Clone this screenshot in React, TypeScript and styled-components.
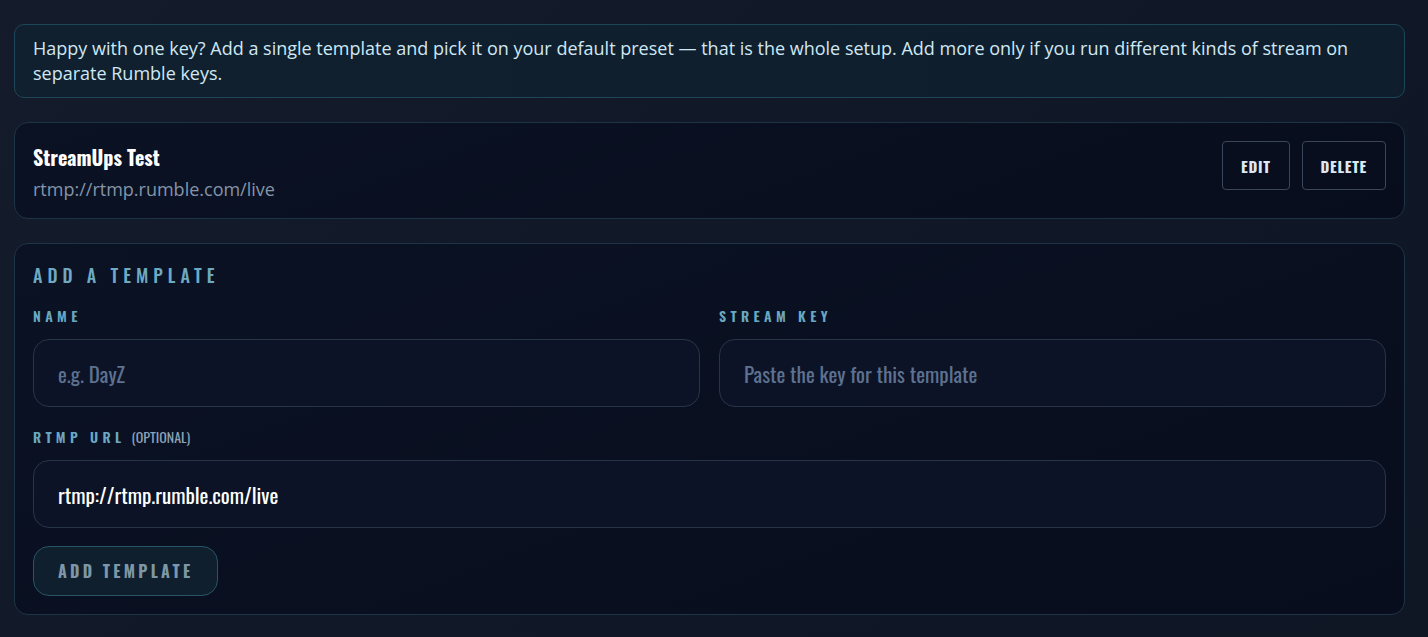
import React from "react";
import styled, { createGlobalStyle } from "styled-components";

const Global = createGlobalStyle`
  html, body { margin: 0; padding: 0; background: #111827; }
  body { font-family: "Open Sans", "Noto Sans", sans-serif; color: #e5edf5; }
  * { box-sizing: border-box; }
`;

const COND = `"Oswald", "Liberation Sans Narrow", "DejaVu Sans Condensed", "Roboto", sans-serif`;

const Page = styled.div`
  min-height: 637px;
  padding: 24px 23px 24px 14px;
  display: flex;
  flex-direction: column;
  gap: 24px;
  background: linear-gradient(135deg, #141c2b 0%, #101727 60%, #0f1624 100%);
`;

const Notice = styled.div`
  border: 1px solid #1d4658;
  border-radius: 10px;
  background: linear-gradient(90deg, #10202f 0%, #0f1e2d 100%);
  padding: 11px 18px;
  font-size: 18px;
  line-height: 25px;
  color: #cfe8f4;
`;

const Card = styled.section<{ $pad?: string }>`
  border: 1px solid #1d3346;
  border-radius: 14px;
  background: linear-gradient(160deg, #0b1224 0%, #070d1c 100%);
  padding: ${(p) => p.$pad ?? "18px"};
`;

const TemplateRow = styled.div`
  display: flex;
  align-items: flex-start;
  justify-content: space-between;
`;

const TemplateInfo = styled.div`
  display: flex;
  flex-direction: column;
  gap: 3px;
`;

const TemplateName = styled.div`
  font-family: ${COND};
  font-weight: 700;
  font-size: 20px;
  line-height: 32px;
  color: #ffffff;
`;

const TemplateUrl = styled.div`
  font-size: 18px;
  line-height: 26px;
  color: #8594a8;
`;

const Actions = styled.div`
  display: flex;
  gap: 12px;
`;

const GhostButton = styled.button`
  height: 49px;
  padding: 0 18px;
  border: 1px solid #3a475a;
  border-radius: 4px;
  background: transparent;
  font-family: ${COND};
  font-weight: 700;
  font-size: 15px;
  letter-spacing: 0.7px;
  color: #dce8f5;
  cursor: pointer;
`;

const SectionTitle = styled.h2`
  margin: 0 0 21px;
  font-family: ${COND};
  font-weight: 500;
  font-size: 18px;
  line-height: 22px;
  letter-spacing: 5px;
  color: #6fa9c2;
`;

const Grid = styled.div`
  display: grid;
  grid-template-columns: 1fr 1fr;
  column-gap: 19px;
  margin-bottom: 21px;
`;

const Field = styled.div`
  display: flex;
  flex-direction: column;
  gap: 14px;
`;

const Label = styled.label`
  font-family: ${COND};
  font-weight: 600;
  font-size: 14px;
  line-height: 18px;
  letter-spacing: 4.4px;
  color: #6aa8c2;
  display: flex;
  align-items: baseline;
  gap: 6px;
`;

const Optional = styled.span`
  font-size: 14px;
  font-weight: 400;
  letter-spacing: 0;
  color: #8aa2b8;
`;

const Input = styled.input`
  width: 100%;
  height: 68px;
  padding: 0 24px;
  border: 1px solid #283549;
  border-radius: 16px;
  background: #0c1326;
  font-family: ${COND};
  font-size: 21px;
  color: #ffffff;
  outline: none;
  &::placeholder { color: #5d7190; }
`;

const SubmitButton = styled.button`
  align-self: flex-start;
  margin-top: 18px;
  height: 50px;
  padding: 0 24px;
  border: 1px solid #275565;
  border-radius: 16px;
  background: #0f1f2e;
  font-family: ${COND};
  font-weight: 700;
  font-size: 16px;
  letter-spacing: 3.3px;
  color: #7e97a6;
  cursor: not-allowed;
`;

export default function App() {
  return (
    <>
      <Global />
      <Page>
        <Notice>
          Happy with one key? Add a single template and pick it on your default preset — that is the whole setup. Add more only if you run different kinds of stream on separate Rumble keys.
        </Notice>
        <Card $pad="18px 18px 16px 18px">
          <TemplateRow>
            <TemplateInfo>
              <TemplateName>StreamUps Test</TemplateName>
              <TemplateUrl>rtmp://rtmp.rumble.com/live</TemplateUrl>
            </TemplateInfo>
            <Actions>
              <GhostButton>EDIT</GhostButton>
              <GhostButton>DELETE</GhostButton>
            </Actions>
          </TemplateRow>
        </Card>
        <Card $pad="20px 18px 18px">
          <SectionTitle>ADD A TEMPLATE</SectionTitle>
          <Grid>
            <Field>
              <Label>NAME</Label>
              <Input placeholder="e.g. DayZ" />
            </Field>
            <Field>
              <Label>STREAM KEY</Label>
              <Input placeholder="Paste the key for this template" />
            </Field>
          </Grid>
          <Field>
            <Label>
              RTMP URL<Optional>(OPTIONAL)</Optional>
            </Label>
            <Input defaultValue="rtmp://rtmp.rumble.com/live" />
          </Field>
          <SubmitButton disabled>ADD TEMPLATE</SubmitButton>
        </Card>
      </Page>
    </>
  );
}
